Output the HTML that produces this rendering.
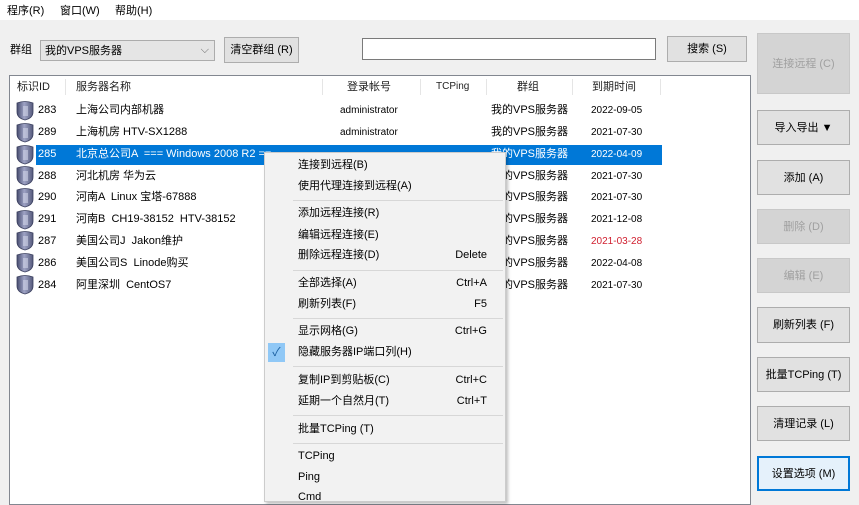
<!DOCTYPE html>
<html><head><meta charset="utf-8"><style>
*{margin:0;padding:0;box-sizing:border-box}
body{width:859px;height:498px;overflow:hidden;background:#f0f0f0;font-family:"Liberation Sans","Noto Sans CJK SC",sans-serif;font-size:11px;line-height:14px;color:#000;position:relative}
.a{position:absolute;white-space:nowrap}
.btn{position:absolute;background:#e1e1e1;border:1px solid #adadad;display:flex;align-items:center;justify-content:center;font-size:11px}
.dis{background:#d4d4d4;border-color:#c8c8c8;color:#a0a0a0}
.row{position:absolute;left:10px;width:740px;height:21px;line-height:21px}
.row span{position:absolute}
.mi{position:absolute;left:298px;font-size:11px;line-height:14px}
.sc{position:absolute;right:372px;font-size:11px;line-height:14px}
.sep{position:absolute;left:293px;width:210px;height:1px;background:#d7d7d7}
</style></head><body>
<div class="a" style="left:0;top:0;width:859px;height:20px;background:#fff"></div>
<div class="a" style="left:7px;top:4px">程序(R)</div>
<div class="a" style="left:60px;top:4px">窗口(W)</div>
<div class="a" style="left:115px;top:4px">帮助(H)</div>

<div class="a" style="left:10px;top:43px">群组</div>
<div class="a" style="left:40px;top:40px;width:175px;height:21px;background:#e5e5e5;border:1px solid #acacac;padding:3px 4px">我的VPS服务器<span style="position:absolute;right:5px;top:2px;color:#666">⌵</span></div>
<div class="btn" style="left:224px;top:37px;width:75px;height:26px">清空群组 (R)</div>
<div class="a" style="left:362px;top:38px;width:294px;height:22px;background:#fff;border:1px solid #7a7a7a"></div>
<div class="btn" style="left:667px;top:36px;width:80px;height:26px">搜索 (S)</div>

<div class="btn dis" style="left:757px;top:33px;width:93px;height:61px">连接远程 (C)</div>
<div class="btn" style="left:757px;top:110px;width:93px;height:35px">导入导出 ▼</div>
<div class="btn" style="left:757px;top:160px;width:93px;height:35px">添加 (A)</div>
<div class="btn dis" style="left:757px;top:209px;width:93px;height:35px">删除 (D)</div>
<div class="btn dis" style="left:757px;top:258px;width:93px;height:35px">编辑 (E)</div>
<div class="btn" style="left:757px;top:307px;width:93px;height:36px">刷新列表 (F)</div>
<div class="btn" style="left:757px;top:357px;width:93px;height:35px">批量TCPing (T)</div>
<div class="btn" style="left:757px;top:406px;width:93px;height:35px">清理记录 (L)</div>
<div class="btn" style="left:757px;top:456px;width:93px;height:35px;border:2px solid #0078d7;background:#e5f1fb">设置选项 (M)</div>

<div class="a" style="left:9px;top:75px;width:742px;height:430px;background:#fff;border:1px solid #828790"></div>
<div class="a" style="left:10px;top:76px;width:740px;height:22px;line-height:22px;color:#222">
<span class="a" style="left:7px">标识ID</span><span class="a" style="left:66px">服务器名称</span>
<span class="a" style="left:337px">登录帐号</span><span class="a" style="left:426px;font-size:10px">TCPing</span>
<span class="a" style="left:507px">群组</span><span class="a" style="left:582px">到期时间</span>
<span class="a" style="left:55px;top:3px;width:1px;height:16px;background:#e5e5e5"></span>
<span class="a" style="left:312px;top:3px;width:1px;height:16px;background:#e5e5e5"></span>
<span class="a" style="left:410px;top:3px;width:1px;height:16px;background:#e5e5e5"></span>
<span class="a" style="left:476px;top:3px;width:1px;height:16px;background:#e5e5e5"></span>
<span class="a" style="left:562px;top:3px;width:1px;height:16px;background:#e5e5e5"></span>
<span class="a" style="left:650px;top:3px;width:1px;height:16px;background:#e5e5e5"></span>
</div>
<div class="a" style="left:36px;top:145px;width:626px;height:20px;background:#0078d7"></div>

<svg class="a" style="left:15px;top:100px" width="22" height="200">
<defs><linearGradient id="g" x1="0" x2="1"><stop offset="0" stop-color="#464b6e"/><stop offset=".45" stop-color="#9ea3c4"/><stop offset="1" stop-color="#555a7c"/></linearGradient>
<g id="s"><path d="M2 2 Q10 -1 18 2 L18 11 Q18 17 10 19 Q2 17 2 11Z" fill="url(#g)" stroke="#3a3f5e" stroke-width=".8"/><rect x="8" y="5" width="5" height="10" fill="#d0d3e8" opacity=".6"/></g></defs>
<use href="#s" y="1"/><use href="#s" y="23"/><use href="#s" y="45"/><use href="#s" y="66"/><use href="#s" y="88"/><use href="#s" y="110"/><use href="#s" y="131"/><use href="#s" y="153"/><use href="#s" y="175"/>
</svg>

<div class="row" style="top:100px"><span style="left:28px">283</span><span style="left:66px">上海公司内部机器</span><span style="left:330px;font-size:10px">administrator</span><span style="left:481px">我的VPS服务器</span><span style="left:581px;font-size:10px">2022-09-05</span></div>
<div class="row" style="top:122px"><span style="left:28px">289</span><span style="left:66px">上海机房 HTV-SX1288</span><span style="left:330px;font-size:10px">administrator</span><span style="left:481px">我的VPS服务器</span><span style="left:581px;font-size:10px">2021-07-30</span></div>
<div class="row" style="top:144px;color:#fff"><span style="left:28px">285</span><span style="left:66px">北京总公司A &nbsp;=== Windows 2008 R2 ==</span><span style="left:481px">我的VPS服务器</span><span style="left:581px;font-size:10px">2022-04-09</span></div>
<div class="row" style="top:166px"><span style="left:28px">288</span><span style="left:66px">河北机房 华为云</span><span style="left:481px">我的VPS服务器</span><span style="left:581px;font-size:10px">2021-07-30</span></div>
<div class="row" style="top:187px"><span style="left:28px">290</span><span style="left:66px">河南A &nbsp;Linux 宝塔-67888</span><span style="left:481px">我的VPS服务器</span><span style="left:581px;font-size:10px">2021-07-30</span></div>
<div class="row" style="top:209px"><span style="left:28px">291</span><span style="left:66px">河南B &nbsp;CH19-38152 &nbsp;HTV-38152</span><span style="left:481px">我的VPS服务器</span><span style="left:581px;font-size:10px">2021-12-08</span></div>
<div class="row" style="top:231px"><span style="left:28px">287</span><span style="left:66px">美国公司J &nbsp;Jakon维护</span><span style="left:481px">我的VPS服务器</span><span style="left:581px;font-size:10px;color:#d02030">2021-03-28</span></div>
<div class="row" style="top:253px"><span style="left:28px">286</span><span style="left:66px">美国公司S &nbsp;Linode购买</span><span style="left:481px">我的VPS服务器</span><span style="left:581px;font-size:10px">2022-04-08</span></div>
<div class="row" style="top:275px"><span style="left:28px">284</span><span style="left:66px">阿里深圳 &nbsp;CentOS7</span><span style="left:481px">我的VPS服务器</span><span style="left:581px;font-size:10px">2021-07-30</span></div>

<div class="a" style="left:264px;top:152px;width:242px;height:350px;background:#f2f2f2;border:1px solid #ccc;box-shadow:2px 2px 3px rgba(0,0,0,.25)"></div>
<div class="mi" style="top:158px">连接到远程(B)</div>
<div class="mi" style="top:179px">使用代理连接到远程(A)</div>
<div class="sep" style="top:200px"></div>
<div class="mi" style="top:206px">添加远程连接(R)</div>
<div class="mi" style="top:228px">编辑远程连接(E)</div>
<div class="mi" style="top:248px">删除远程连接(D)</div><div class="sc" style="top:248px">Delete</div>
<div class="sep" style="top:270px"></div>
<div class="mi" style="top:276px">全部选择(A)</div><div class="sc" style="top:276px">Ctrl+A</div>
<div class="mi" style="top:297px">刷新列表(F)</div><div class="sc" style="top:297px">F5</div>
<div class="sep" style="top:318px"></div>
<div class="mi" style="top:324px">显示网格(G)</div><div class="sc" style="top:324px">Ctrl+G</div>
<div class="a" style="left:268px;top:343px;width:17px;height:19px;background:#90c8f6;color:#1a5fa0;text-align:center;line-height:19px;font-size:12px">✓</div>
<div class="mi" style="top:345px">隐藏服务器IP端口列(H)</div>
<div class="sep" style="top:366px"></div>
<div class="mi" style="top:373px">复制IP到剪贴板(C)</div><div class="sc" style="top:373px">Ctrl+C</div>
<div class="mi" style="top:394px">延期一个自然月(T)</div><div class="sc" style="top:394px">Ctrl+T</div>
<div class="sep" style="top:415px"></div>
<div class="mi" style="top:422px">批量TCPing (T)</div>
<div class="sep" style="top:443px"></div>
<div class="mi" style="top:449px">TCPing</div>
<div class="mi" style="top:470px">Ping</div>
<div class="mi" style="top:490px">Cmd</div>
</body></html>
